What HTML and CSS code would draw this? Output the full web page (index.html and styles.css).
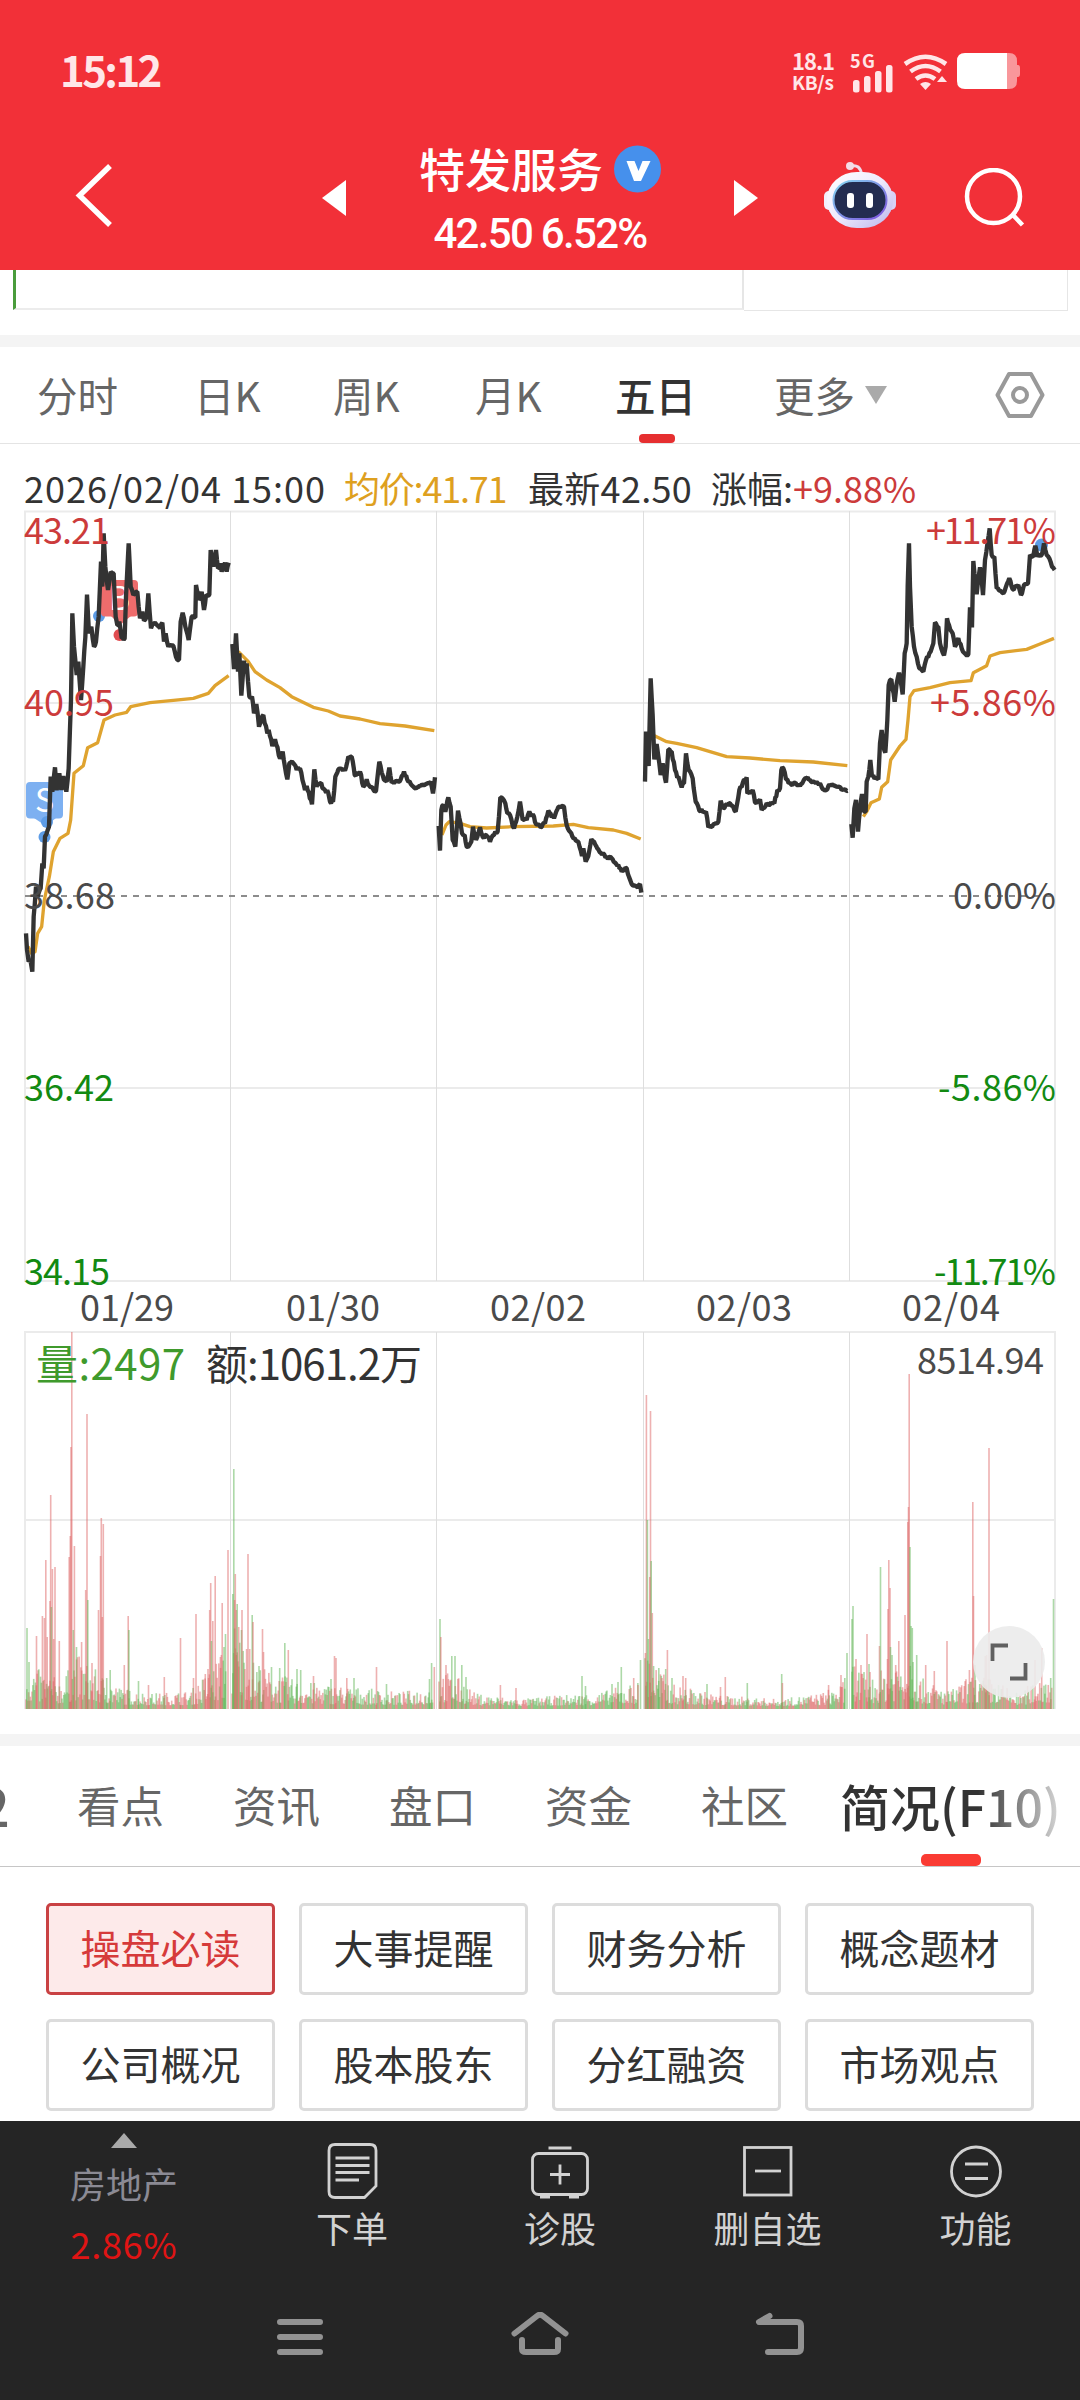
FILE: index.html
```
<!DOCTYPE html>
<html lang="zh-CN">

<head>
  <meta charset="UTF-8">
  <title>特发服务</title>
  <link rel="stylesheet" href="styles.css">
</head>

<body>

  <!-- Header -->
  <header class="header">
    <div class="status-bar">
      <span class="clock">15:12</span>
      <div class="net-speed"><span>18.1</span><span class="unit">KB/s</span></div>
      <svg class="status-icons" width="180" height="50" viewBox="845 46 180 50">
        <text class="net-type" x="850" y="68" textLength="25">5G</text>
        <g fill="#ffe6e8">
          <rect x="853" y="80" width="6.500" height="12.500" rx="2.500" />
          <rect x="864" y="76" width="6.500" height="16.500" rx="2.500" />
          <rect x="875" y="71" width="6.500" height="21.500" rx="2.500" />
          <rect x="886" y="65" width="6.500" height="27.500" rx="2.500" />
          <path d="M920 84q5.500-4 11 0l-5.500 6z" />
          <path d="M937 82l5-6 5 6z" />
        </g>
        <g fill="none" stroke="#ffe6e8" stroke-width="4.600">
          <path d="M905 64q20.500-14.500 41 0" />
          <path d="M910.500 71.500q15-11 30 0" />
          <path d="M916 79q9.500-7 19 0" />
        </g>
        <path fill="#f9979b" d="M1006 53h3q8 0 8 8v4h1q2 0 2 3v6q0 3-2 3h-1v4q0 8-8 8h-3z" />
        <path fill="#fff" d="M965 53h42v36h-42q-8 0-8-8v-20q0-8 8-8z" />
      </svg>
    </div>
    <div class="title-bar">
      <svg class="back" width="44" height="70" viewBox="70 160 44 70">
        <path d="M110 166L79.500 195.500L110 225" fill="none" stroke="#fff" stroke-width="5.500" />
      </svg>
      <svg class="prev" width="24" height="36" viewBox="0 0 24 36"><path d="M0 18L24 0V36z" fill="#fff" /></svg>
      <div class="stock">
        <div class="stock-name">
          <span>特发服务</span>
          <svg width="47" height="48" viewBox="0 0 47 48">
            <circle cx="23.500" cy="24" r="23.500" fill="#4690ec" />
            <path d="M12.500 16h8l4 10 4-10h8l-9.500 20h-7z" fill="#fff" />
          </svg>
        </div>
        <div class="stock-price">42.50 6.52%</div>
      </div>
      <svg class="next" width="24" height="36" viewBox="0 0 24 36"><path d="M24 18L0 0V36z" fill="#fff" /></svg>
      <svg class="robot" width="74" height="68" viewBox="824 161 74 68">
        <defs>
          <linearGradient id="shell" x1="0" y1="0" x2="1" y2="1">
            <stop offset="0" stop-color="#fff" />
            <stop offset=".5" stop-color="#eeeafd" />
            <stop offset="1" stop-color="#b9b4ec" />
          </linearGradient>
          <linearGradient id="rim" x1="0" y1="0" x2="1" y2="1">
            <stop offset="0" stop-color="#86d8f2" />
            <stop offset="1" stop-color="#7c50dc" />
          </linearGradient>
        </defs>
        <path d="M852 166q9-2 10.500 8" fill="none" stroke="#efdcec" stroke-width="3" />
        <circle cx="851" cy="166" r="4" fill="#f4dce6" />
        <rect x="825" y="191" width="10" height="19" rx="5" fill="#f2effc" />
        <rect x="887" y="191" width="10" height="19" rx="5" fill="#d8d2f6" />
        <rect x="828" y="172" width="66" height="56" rx="30" ry="27" fill="url(#shell)" />
        <rect x="834.500" y="181" width="53" height="38" rx="19" fill="#232c50" stroke="url(#rim)" stroke-width="2" />
        <rect x="848" y="193" width="7" height="15" rx="3" fill="#fff" />
        <rect x="867" y="193" width="7" height="15" rx="3" fill="#fff" />
      </svg>
      <svg class="search" width="62" height="62" viewBox="965 168 62 62">
        <g fill="none" stroke="#fff" stroke-width="4.500">
          <circle cx="994.500" cy="196.500" r="26.500" />
          <path d="M1013 214L1023.500 225" />
        </g>
      </svg>
    </div>
  </header>

  <!-- End of the quote panel above -->
  <div class="panel-tail">
    <div class="tail-left"></div>
    <div class="tail-right"></div>
  </div>
  <div class="divider"></div>

  <nav class="period-tabs">
    <span>分时</span>
    <span>日K</span>
    <span>周K</span>
    <span>月K</span>
    <span class="active">五日</span>
    <span class="more">更多<i class="caret"></i></span>
    <svg width="50" height="48" viewBox="0 0 50 48">
      <g fill="none" stroke="#999" stroke-width="4" stroke-linejoin="round">
        <path d="M14 3h22L47.500 24L36 45H14L2.500 24z" />
        <circle cx="25" cy="24" r="7" />
      </g>
    </svg>
  </nav>

  <div class="chart-info">
    <span class="time">2026/02/04 15:00</span>
    <span class="avg">均价:41.71</span>
    <span class="last">最新42.50</span>
    <span>涨幅:<b>+9.88%</b></span>
  </div>

  <!-- Five-day chart -->
  <svg class="chart" width="1080" height="1224" viewBox="0 510 1080 1224">
    <g class="grid">
      <path d="M24 511.500H1056M24 703H1056M24 1088H1056M24 1281H1056M25 511V1281M1055 511V1281" />
      <path d="M24 1332H1056M24 1520H1056M25 1332V1709M1055 1332V1709" />
      <path class="thin" d="M230.500 511V1281M436.500 511V1281M643.500 511V1281M849.500 511V1281" />
      <path class="thin" d="M230.500 1332V1709M436.500 1332V1709M643.500 1332V1709M849.500 1332V1709" />
    </g>
    <path class="zero-line" d="M25 896H1055" />

    <g id="averages"></g>

    <!-- Trade markers -->
    <rect x="26" y="782" width="37" height="36.500" rx="4" fill="#7db0f1" />
    <path d="M34 818h22l-10 8z" fill="#7db0f1" />
    <text class="mark" x="44.500" y="811.500">S</text>
    <circle class="sell" cx="47" cy="822" r="6" />
    <circle class="sell" cx="44.500" cy="837" r="6" />
    <circle class="sell" cx="99" cy="616" r="6" />
    <circle class="sell" cx="1041.500" cy="545" r="6.500" />
    <rect x="101" y="580" width="37" height="36.500" rx="4" fill="#ee6c6c" />
    <path d="M111 616h20l-11 9z" fill="#ee6c6c" />
    <text class="mark" x="119.500" y="609.500">B</text>
    <circle cx="119.500" cy="635" r="6" fill="#e04d50" />

    <g id="prices"></g>
    <g id="volumes"></g>

    <g class="labels">
      <text class="up" x="24" y="543.500" textLength="86">43.21</text>
      <text class="up" x="24" y="715.500" textLength="90">40.95</text>
      <text x="24" y="908.500" textLength="91">38.68</text>
      <text class="down" x="24" y="1101" textLength="90">36.42</text>
      <text class="down" x="24" y="1284.500" textLength="86">34.15</text>
      <text class="up" x="926" y="543.500" textLength="130">+11.71%</text>
      <text class="up" x="930" y="715.500" textLength="126">+5.86%</text>
      <text x="953" y="908.500" textLength="103">0.00%</text>
      <text class="down" x="938" y="1101" textLength="118">-5.86%</text>
      <text class="down" x="934" y="1284.500" textLength="122">-11.71%</text>
      <text x="80" y="1321" textLength="94">01/29</text>
      <text x="286" y="1321" textLength="94">01/30</text>
      <text x="490" y="1321" textLength="96">02/02</text>
      <text x="696" y="1321" textLength="96">02/03</text>
      <text x="902" y="1321" textLength="98">02/04</text>
      <text x="917" y="1374" textLength="127">8514.94</text>
      <text class="vol down" x="36" y="1380" textLength="149">量:2497</text>
      <text class="vol" x="206" y="1380" textLength="216">额:1061.2万</text>
    </g>

    <circle cx="1009" cy="1662" r="36" fill="#ebebeb" fill-opacity=".9" />
    <path d="M992.500 1661V1645.500H1008M1010 1678.500H1025.500V1663" fill="none" stroke="#606060" stroke-width="3.800" />
  </svg>
  <div class="divider"></div>

  <nav class="info-tabs">
    <span class="cut">L2</span>
    <span>看点</span>
    <span>资讯</span>
    <span>盘口</span>
    <span>资金</span>
    <span>社区</span>
    <span class="active">简况(F10)</span>
  </nav>

  <section class="topics">
    <button class="selected">操盘必读</button>
    <button>大事提醒</button>
    <button>财务分析</button>
    <button>概念题材</button>
    <button>公司概况</button>
    <button>股本股东</button>
    <button>分红融资</button>
    <button>市场观点</button>
  </section>

  <!-- Bottom toolbar -->
  <footer class="footer">
    <div class="toolbar">
      <div class="sector">
        <i class="arrow-up"></i>
        <span>房地产</span>
        <span class="change">2.86%</span>
      </div>
      <div class="tool">
        <svg width="60" height="60" viewBox="0 0 60 60">
          <path d="M13 4.500H48Q54 4.500 54 10.500V46L42.500 57.500H13Q7 57.500 7 51.500V10.500Q7 4.500 13 4.500z" />
          <path d="M13.500 18H47.500M13.500 25.500H47.500M13.500 32.500H47.500M13.500 40H37" />
        </svg>
        <span>下单</span>
      </div>
      <div class="tool">
        <svg width="60" height="60" viewBox="0 0 60 60">
          <rect x="2.500" y="13.500" width="55" height="41" rx="6" />
          <path d="M18.500 8H41.500M20 34.500H40M30 24.500V44.500M10 57H20M39 57H49" />
        </svg>
        <span>诊股</span>
      </div>
      <div class="tool">
        <svg width="60" height="60" viewBox="0 0 60 60">
          <rect x="6.500" y="7.500" width="46.500" height="47.500" />
          <path d="M17 31H43" />
        </svg>
        <span>删自选</span>
      </div>
      <div class="tool">
        <svg width="60" height="60" viewBox="0 0 60 60">
          <circle cx="30" cy="31.500" r="24.500" />
          <path d="M19 24H42M19 38.500H42" />
        </svg>
        <span>功能</span>
      </div>
    </div>
    <div class="system-nav">
      <svg width="60" height="50" viewBox="270 2312 60 50">
        <path d="M280 2322H320M280 2337H320M280 2352H320" />
      </svg>
      <svg width="64" height="50" viewBox="508 2312 64 50">
        <path d="M514.500 2333.500L537 2316Q540 2313.500 543 2316L565.500 2333.500" />
        <path d="M522 2340V2349Q522 2352 526 2352H554Q558 2352 558 2349V2340" />
      </svg>
      <svg width="60" height="50" viewBox="750 2312 60 50">
        <path d="M769.500 2316L759 2322H797Q801 2322 801 2326V2348Q801 2352 797 2352H768" />
      </svg>
    </div>
  </footer>

  <script src="chart.js"></script>

</body>

</html>
```
FILE: styles.css
```
* {
  box-sizing: border-box;
}

body {
  margin: 0;
  width: 1080px;
  height: 2400px;
  overflow: hidden;
  background: #fff;
  color: #333;
  font-family: "Noto Sans CJK SC", sans-serif;
}

svg {
  display: block;
  flex: none;
}

/* Header */
.header {
  height: 270px;
  background: #f23038;
  color: #fff;
}

.status-bar {
  display: flex;
  height: 140px;
  padding: 46px 0 0 60px;
  color: #ffe6e8;
}

.clock {
  width: 732px;
  font-size: 42px;
  font-weight: 700;
  line-height: 46px;
  letter-spacing: -2.6px;
}

.net-speed {
  display: flex;
  flex-direction: column;
  width: 53px;
  font-size: 22px;
  font-weight: 700;
  line-height: 24px;
  letter-spacing: -1px;
  padding-top: 2px;
}

.net-speed .unit {
  font-size: 19px;
  line-height: 20px;
  letter-spacing: -0.3px;
}

.net-type {
  font-size: 18px;
  font-weight: 700;
  fill: #ffe6e8;
}

.title-bar {
  display: flex;
  height: 130px;
  padding-left: 70px;
}

.back {
  margin-top: 20px;
}

.prev {
  margin: 40px 0 0 208px;
}

.stock {
  width: 388px;
  text-align: center;
}

.stock-name {
  display: flex;
  gap: 11px;
  padding: 2px 0 0 73px;
  font-size: 46px;
  font-weight: 500;
  line-height: 50px;
  white-space: nowrap;
}

.stock-name svg {
  margin-top: 3px;
}

.stock-price {
  margin-top: 17px;
  font-family: Roboto, sans-serif;
  font-size: 42px;
  font-weight: 500;
  line-height: 48px;
  letter-spacing: -1.7px;
}

.next {
  margin-top: 40px;
}

.robot {
  margin: 21px 0 0 65px;
}

.search {
  margin: 28px 0 0 67px;
}

/* Bottom edge of the quote panel */
.panel-tail {
  display: flex;
  height: 65px;
  padding-left: 13px;
}

.tail-left {
  width: 731px;
  height: 40px;
  border-left: 3px solid #4a9c3c;
  border-right: 2px solid #e6e6e6;
  border-bottom: 2px solid #ececec;
}

.tail-right {
  width: 324px;
  height: 41px;
  border-right: 1px solid #e6e6e6;
  border-bottom: 1px solid #e6e6e6;
}

.divider {
  height: 12px;
  background: #f4f4f4;
}

/* Period tabs */
.period-tabs {
  display: grid;
  grid-template-columns: 157px 139px 142px 140px 159px 220px 50px;
  height: 97px;
  padding-left: 37px;
  border-bottom: 1px solid #e4e4e4;
  color: #666;
  font-size: 40.5px;
  line-height: 96px;
}

.period-tabs svg {
  margin: 24px 0 0 1px;
}

.period-tabs .active {
  position: relative;
  color: #333;
  font-weight: 500;
}

.period-tabs .active::after {
  content: "";
  position: absolute;
  left: 24px;
  bottom: 0;
  width: 36px;
  height: 9px;
  border-radius: 4px;
  background: #e62f30;
}

.more {
  display: flex;
}

.caret {
  margin: 39px 0 0 10px;
  width: 0;
  height: 0;
  border: 11.5px solid transparent;
  border-top: 18px solid #aaa;
  border-bottom: 0;
}

.chart-info {
  display: flex;
  height: 66px;
  padding: 18px 0 0 24px;
  font-size: 36px;
  line-height: 50px;
  white-space: nowrap;
}

.chart-info b {
  color: #cc3b3b;
  font-weight: 400;
}

.chart-info .time {
  width: 320px;
  letter-spacing: 1px;
}

.chart-info .avg {
  width: 184px;
  color: #dea01f;
  letter-spacing: -1.2px;
}

.chart-info .last {
  width: 183px;
  letter-spacing: 0.3px;
}

/* Chart */
.chart {
  overflow: visible;
}

.grid path {
  fill: none;
  stroke: #ebebeb;
  stroke-width: 2;
}

.grid .thin {
  stroke: #dedede;
  stroke-width: 1;
}

.zero-line {
  stroke: #8c8c8c;
  stroke-width: 1.8;
  stroke-dasharray: 6 6;
}

.price-line {
  fill: none;
  stroke: #333;
  stroke-width: 13;
  stroke-linejoin: bevel;
}

.avg-line {
  fill: none;
  stroke: #dfa32f;
  stroke-width: 10;
  stroke-linejoin: round;
}

.sell {
  fill: #5d9ce6;
}

.mark {
  fill: #fff;
  font-size: 32px;
  text-anchor: middle;
}

.bar {
  fill-opacity: 0.5;
}

.bar.r {
  fill: #de6464;
}

.bar.g {
  fill: #5cb452;
}

.labels text {
  fill: #4a4a4a;
  font-size: 36px;
}

.labels .up {
  fill: #cc3b3b;
}

.labels .down {
  fill: #128a12;
}

.labels .vol {
  fill: #333;
  font-size: 42px;
}

.labels .vol.down {
  fill: #3f9a2c;
}

/* Info tabs */
.info-tabs {
  display: flex;
  height: 121px;
  border-bottom: 1px solid #c6c6c6;
  overflow: hidden;
  color: #666;
  font-size: 43.5px;
  line-height: 118px;
  white-space: nowrap;
}

.info-tabs span {
  flex: none;
  width: 156px;
}

.info-tabs .cut {
  width: 77px;
  font-size: 52px;
  font-weight: 500;
  text-indent: -49px;
}

.info-tabs .active {
  position: relative;
  width: 230px;
  margin-left: -17px;
  font-size: 50px;
  font-weight: 500;
  color: transparent;
  background: linear-gradient(to right, #333 60%, #d8d8d8 96%);
  -webkit-background-clip: text;
  background-clip: text;
}

.info-tabs .active::after {
  content: "";
  position: absolute;
  left: 81px;
  bottom: 0;
  width: 60px;
  height: 12px;
  border-radius: 5px;
  background: #fa3b33;
}

/* F10 topics */
.topics {
  display: grid;
  grid-template-columns: repeat(4, 229px);
  gap: 24px;
  height: 254px;
  padding: 36px 0 0 46px;
  align-content: start;
}

.topics button {
  height: 92px;
  padding: 0 0 5px;
  border: 3px solid #dcdcdc;
  border-radius: 5px;
  background: #fff;
  color: #333;
  font-family: inherit;
  font-size: 40px;
}

.topics .selected {
  border-color: #c94143;
  background: #fdeaea;
  color: #d63a3a;
}

/* Bottom toolbar */
.footer {
  height: 279px;
  background: #252525;
}

.toolbar {
  display: grid;
  grid-template-columns: 248px 208px 208px 207px 209px;
  height: 189px;
  color: #d2d2d2;
  font-size: 36px;
}

.sector,
.tool {
  display: flex;
  flex-direction: column;
  align-items: center;
}

.sector {
  padding-top: 12px;
  color: #8b8a94;
  line-height: 60px;
}

.sector .change {
  color: #e01414;
  letter-spacing: 0.8px;
}

.arrow-up {
  width: 0;
  height: 0;
  margin-bottom: 5px;
  border: 13.5px solid transparent;
  border-bottom: 15px solid #aaa;
  border-top: 0;
}

.tool {
  padding-top: 19px;
  line-height: 52px;
}

.tool svg {
  margin-bottom: 1px;
  fill: none;
  stroke: #d2d2d2;
  stroke-width: 2.8;
}

.system-nav {
  display: flex;
  gap: 178px;
  padding: 2px 0 0 270px;
}

.system-nav svg {
  fill: none;
  stroke: #929292;
  stroke-width: 6;
  stroke-linecap: round;
  stroke-linejoin: round;
}
```
FILE: chart.js
```
// Each day has its own origin; points are stored at three units per pixel
const days = [
  {
    origin: [0, 500],
    price: "78,1300 81,1350 86,1385 92,1385 97,1415 101,1250 108,1160 113,1190 122,1165 127,1090 131,1105 135,1010 147,980 152,830 157,875 165,802 170,870 178,820 184,870 190,828 199,875 206,805 213,600 217,340 222,440 230,525 235,485 243,600 250,500 256,412 261,284 267,400 274,380 282,440 288,425 296,350 303,185 307,260 311,100 316,200 324,270 332,215 341,220 347,350 352,375 358,365 365,415 374,415 378,290 386,130 392,260 400,285 412,275 420,355 427,335 432,362 440,350 445,280 453,385 465,368 480,385 487,368 492,425 497,400 505,440 520,437 532,480 537,480 542,365 548,338 556,380 566,420 575,350 586,352 588,255 597,300 605,275 612,330 618,285 628,285 632,150 640,200 648,150 654,205 662,190 665,215 675,188 680,215 686,188",
    avg: "84,1340 95,1360 105,1355 113,1300 125,1280 133,1200 148,1130 160,1055 180,1015 204,1000 212,960 222,820 250,797 263,743 293,728 312,660 345,645 380,637 392,620 450,608 520,601 580,595 625,580 645,557 686,527"
  },
  {
    origin: [0, 500],
    price: "697,432 702,507 708,400 714,515 718,460 724,587 732,482 735,520 740,490 748,590 756,590 762,640 769,612 777,680 790,645 802,700 806,690 817,738 825,718 840,775 848,755 862,838 868,790 880,790 890,810 900,805 915,870 920,858 936,913 943,808 950,860 960,850 975,870 985,880 990,905 999,905 1006,830 1015,808 1035,812 1045,770 1055,770 1064,825 1080,815 1090,860 1100,838 1110,860 1128,873 1138,785 1152,840 1160,845 1168,803 1175,848 1195,845 1212,815 1225,845 1240,860 1255,862 1270,855 1292,845 1299,880 1305,832",
    avg: "715,455 745,485 765,515 800,540 840,563 875,590 940,622 985,633 1020,648 1080,657 1140,671 1215,678 1303,692"
  },
  {
    origin: [430, 640],
    price: "26,558 30,632 34,510 40,495 46,515 55,472 62,500 68,600 76,620 84,512 96,580 104,585 110,620 124,605 129,560 138,600 150,562 158,590 172,590 180,605 192,585 203,575 211,472 226,490 232,520 240,525 252,565 262,530 270,485 278,540 290,540 298,515 312,530 318,552 332,562 345,550 355,512 372,535 382,508 402,500 410,555 420,575 434,595 445,605 456,648 460,625 467,665 475,648 484,597 492,605 505,628 530,650 548,658 565,675 575,695 590,685 605,732 620,740 630,732 634,758",
    avg: "36,585 48,555 58,545 90,550 120,560 170,564 250,560 370,558 430,553 475,563 550,570 590,580 632,597"
  },
  {
    origin: [430, 640],
    price: "645,425 648,275 656,378 662,115 668,225 673,358 680,312 692,405 698,370 708,428 715,328 725,335 735,390 755,442 762,430 768,340 776,390 788,415 797,485 808,512 828,515 835,562 850,553 865,545 872,482 880,505 900,490 917,515 928,450 938,430 950,412 952,460 968,450 975,487 990,478 995,510 1010,490 1033,490 1042,450 1050,445 1054,390 1060,385 1068,418 1080,428 1110,438 1130,415 1150,425 1170,430 1185,452 1205,432 1235,450 1253,452",
    avg: "660,280 675,288 710,305 740,310 800,323 890,350 960,354 1050,362 1150,366 1252,377"
  },
  {
    origin: [800, 500],
    price: "154,972 158,1013 163,925 168,900 174,995 180,930 186,882 192,935 197,935 200,845 205,830 211,780 216,830 235,838 240,730 245,690 250,735 256,758 262,660 266,555 274,538 284,605 290,550 297,518 308,583 314,460 320,430 323,260 327,130 330,260 335,380 342,440 350,470 358,505 370,515 378,480 388,460 400,430 405,367 415,380 420,430 432,466 437,440 441,355 447,375 458,400 465,440 475,415 485,445 497,463 505,463 510,322 516,382 520,183 530,283 540,202 549,285 555,180 563,125 569,85 575,165 583,170 590,265 610,280 628,235 638,268 655,255 663,285 672,255 684,250 690,165 700,170 706,137 712,170 725,165 732,130 740,165 748,175 756,200 764,210",
    avg: "190,950 200,935 213,908 238,897 245,862 263,845 272,780 300,738 318,718 324,660 330,590 342,572 390,563 450,548 513,542 520,518 560,497 570,468 600,458 680,448 720,432 762,415"
  }
];

// Upper level of ordinary trading volume per day: x, height
const levels = [
  [[26, 44], [60, 28], [70, 40], [75, 55], [100, 34], [120, 20], [150, 14], [190, 16], [206, 34], [226, 62]],
  [[232, 95], [250, 50], [270, 36], [300, 26], [340, 22], [400, 15], [433, 22]],
  [[439, 40], [465, 26], [475, 14], [520, 8], [560, 12], [600, 15], [638, 26]],
  [[645, 72], [655, 46], [670, 24], [720, 12], [780, 8], [820, 14], [845, 26]],
  [[852, 50], [870, 28], [885, 40], [910, 62], [920, 30], [950, 16], [970, 32], [990, 30], [1020, 13], [1035, 30], [1052, 38]]
];

// Peaks: x, height, colour
const peaks = "27,81,g 29,47,g 36.5,73,r 42.4,93,r 44.4,91,r 45.8,149,r 47.2,72,r 50,108,r 50.7,214,r 51.4,102,g 52.4,140,r 53.7,70,r 55,142,r 59.3,68,r 69.2,152,r 70.3,173,r 71,262,r 71.8,377,r 73.3,79,g 74.4,163,r 76.5,62,g 81.6,67,r 85.7,119,r 87,295,r 87.8,109,g 92,46,r 98.5,99,r 100.5,153,r 101.3,191,r 102.3,92,r 103.3,185,r 106.7,31,g 110.2,39,g 124.3,44,r 128.2,93,r 128.9,79,g 138.5,28,g 148.5,24,r 164.3,32,r 180.5,71,r 193.5,31,r 196,95,r 205.3,35,r 208,40,r 209.7,99,r 210.7,126,r 211.5,68,g 212.8,88,r 215.2,133,r 220.4,52,r 222.2,106,r 224,62,g 225.5,75,g 228,159,r 232.8,115,g 233.8,240,g 234.6,109,r 235.3,135,r 236.3,99,r 237.2,105,g 238.7,82,r 241.5,79,g 242,99,r 246.6,60,r 248,155,r 249.7,60,r 252.2,94,g 253,87,r 259,43,g 262.5,80,r 263.5,57,r 271.5,42,g 279.7,41,g 284.8,66,g 288.3,59,r 297,40,g 300.7,39,g 313.5,33,r 331,30,g 334.5,53,r 336,51,r 346.8,31,r 354,31,g 376.5,42,r 386.5,25,g 429.5,30,g 431.6,46,g 434.3,42,r 440,90,g 440.8,72,r 446,44,r 451.8,53,g 455,53,g 461.8,44,g 466,32,g 500.4,24,r 516,21,r 582,33,g 585.5,23,g 612,25,g 618,27,g 621.3,42,g 633.7,31,r 638,24,r 640.5,49,g 645.4,56,r 646.4,314,r 647.4,189,g 648.5,70,g 649.8,132,r 650.5,298,r 651.2,148,g 652.3,96,r 653.6,43,g 658.8,41,g 662,31,r 665.7,40,g 667.4,59,r 672,31,g 683,33,r 685.7,31,r 707,25,g 720.5,22,r 725.3,32,r 747.3,26,g 781.7,35,g 782.4,26,r 828.6,24,r 841,34,r 844.8,31,g 847,56,g 852,90,g 853,103,g 856,50,r 861,44,r 867,75,r 869,45,g 870,37,r 879.5,63,r 880.5,142,g 887.5,50,r 888,100,r 888.8,149,r 890,121,r 890.5,62,g 892,54,g 895.7,44,r 898.8,68,r 905,94,r 907.8,187,r 908.5,202,r 909.2,335,r 910,162,g 911,83,g 912.3,81,g 913,47,g 916.7,54,g 925.7,44,r 934.3,38,r 947,68,r 969.4,39,r 972.8,207,r 973.5,113,r 975,44,g 985.3,53,r 986.6,54,r 989,261,r 1035,49,r 1041.7,61,r 1050.7,31,g 1053.5,110,g";

const SVG_NS = "http://www.w3.org/2000/svg";
const FLOOR = 1709;

let seed = 7;
function random() {
  seed = (seed * 16807) % 2147483647;
  return seed / 2147483647;
}

function add(parent, tag, attrs) {
  const el = document.createElementNS(SVG_NS, tag);
  for (const key in attrs) el.setAttribute(key, attrs[key]);
  document.getElementById(parent).appendChild(el);
}

function parse(str) {
  return str.split(" ").map(p => p.split(",").map(Number));
}

// Adds the small minute-to-minute moves between the stored points
function roughen(points) {
  const out = [points[0]];
  for (let i = 1; i < points.length; i++) {
    const [x0, y0] = points[i - 1];
    const [x1, y1] = points[i];
    const steps = Math.max(1, Math.round((x1 - x0) / 3.5));
    for (let s = 1; s < steps; s++) {
      const t = s / steps;
      out.push([x0 + (x1 - x0) * t, y0 + (y1 - y0) * t + (random() - 0.5) * 12]);
    }
    out.push([x1, y1]);
  }
  return out.map(p => p.map(n => n.toFixed(1)).join(",")).join(" ");
}

for (const day of days) {
  const transform = `translate(${day.origin}) scale(${1 / 3})`;
  add("averages", "polyline", { class: "avg-line", transform, points: day.avg });
  add("prices", "polyline", { class: "price-line", transform, points: roughen(parse(day.price)) });
}

function addBar(x, height, color) {
  add("volumes", "rect", { class: `bar ${color}`, x: x - 0.8, y: FLOOR - height, width: 1.6, height });
}

for (const level of levels) {
  let i = 0;
  const end = level[level.length - 1][0];
  let color = "g";
  for (let x = level[0][0]; x <= end; x += 0.857) {
    while (x > level[i + 1][0] && i < level.length - 2) i++;
    const [x0, h0] = level[i];
    const [x1, h1] = level[i + 1];
    const top = h0 + (h1 - h0) * (x - x0) / (x1 - x0);
    if (random() < 0.45) color = color === "g" ? "r" : "g";
    addBar(x, 2 + top * (0.12 + 0.88 * Math.pow(random(), 1.5)), color);
  }
}

for (const p of peaks.split(" ")) {
  const [x, height, color] = p.split(",");
  addBar(Number(x), Number(height), color);
}
```
